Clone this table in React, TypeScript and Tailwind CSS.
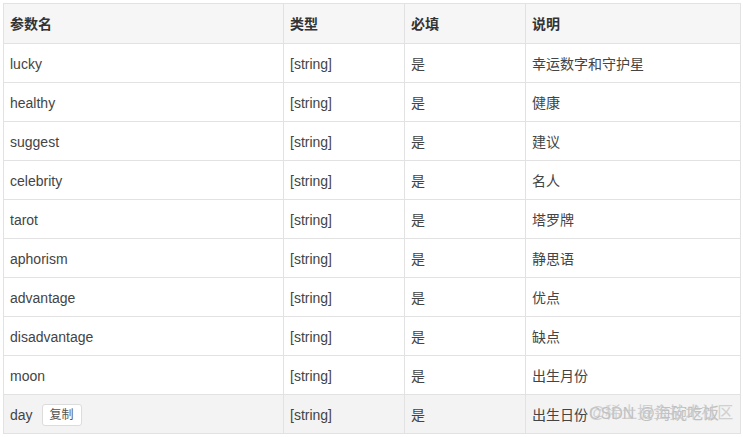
import React from "react";

const rows: [string, string, string, string][] = [
  ["lucky", "[string]", "是", "幸运数字和守护星"],
  ["healthy", "[string]", "是", "健康"],
  ["suggest", "[string]", "是", "建议"],
  ["celebrity", "[string]", "是", "名人"],
  ["tarot", "[string]", "是", "塔罗牌"],
  ["aphorism", "[string]", "是", "静思语"],
  ["advantage", "[string]", "是", "优点"],
  ["disadvantage", "[string]", "是", "缺点"],
  ["moon", "[string]", "是", "出生月份"],
  ["day", "[string]", "是", "出生日份"],
];

const font = { fontFamily: '"Liberation Sans", "Noto Sans CJK SC", Arial, sans-serif' };

export default function App() {
  return (
    <div className="w-[743px] h-[437px] bg-white pt-[3px] pl-[3px] text-[14px] text-[#333]" style={font}>
      <table className="border-collapse w-[737px] table-fixed">
        <colgroup>
          <col className="w-[280px]" />
          <col className="w-[121px]" />
          <col className="w-[121px]" />
          <col className="w-[215px]" />
        </colgroup>
        <thead>
          <tr className="h-[40px] bg-[#f6f6f6]">
            {["参数名", "类型", "必填", "说明"].map((h) => (
              <th key={h} className="border border-[#e2e2e2] px-[6px] pt-[1px] text-left font-bold text-[#333] leading-none">
                {h}
              </th>
            ))}
          </tr>
        </thead>
        <tbody>
          {rows.map((r, i) => {
            const last = i === rows.length - 1;
            return (
              <tr key={r[0]} className={`h-[39px] ${last ? "bg-[#f3f3f3]" : "bg-white"}`}>
                <td className="border border-[#e2e2e2] px-[6px] pt-[2px] text-[#444]">
                  {last ? (
                    <div className="flex items-center gap-[9px]">
                      <span>{r[0]}</span>
                      <span className="inline-flex items-center h-[22px] px-[7px] bg-white border border-[#dcdcdc] rounded-[3px] text-[12px] text-[#555]">
                        复制
                      </span>
                    </div>
                  ) : (
                    r[0]
                  )}
                </td>
                <td className="border border-[#e2e2e2] px-[6px] pt-[2px] text-[#444]">{r[1]}</td>
                <td className="border border-[#e2e2e2] px-[6px] pt-[2px] text-[#444]">{r[2]}</td>
                <td className="border border-[#e2e2e2] px-[6px] pt-[2px] text-[#444] relative">
                  {r[3]}
                  {last && (
                    <>
                      <span className="absolute left-[63px] top-[11px] text-[16px] text-[#bbbbbb] whitespace-nowrap opacity-90 leading-none">
                        CSDN @海碗吃饭
                      </span>
                      <span className="absolute left-[63px] top-[10px] text-[16px] text-[#c8c8c8] whitespace-nowrap opacity-80 leading-none">
                        @稀土掘金技术社区
                      </span>
                    </>
                  )}
                </td>
              </tr>
            );
          })}
        </tbody>
      </table>
    </div>
  );
}
